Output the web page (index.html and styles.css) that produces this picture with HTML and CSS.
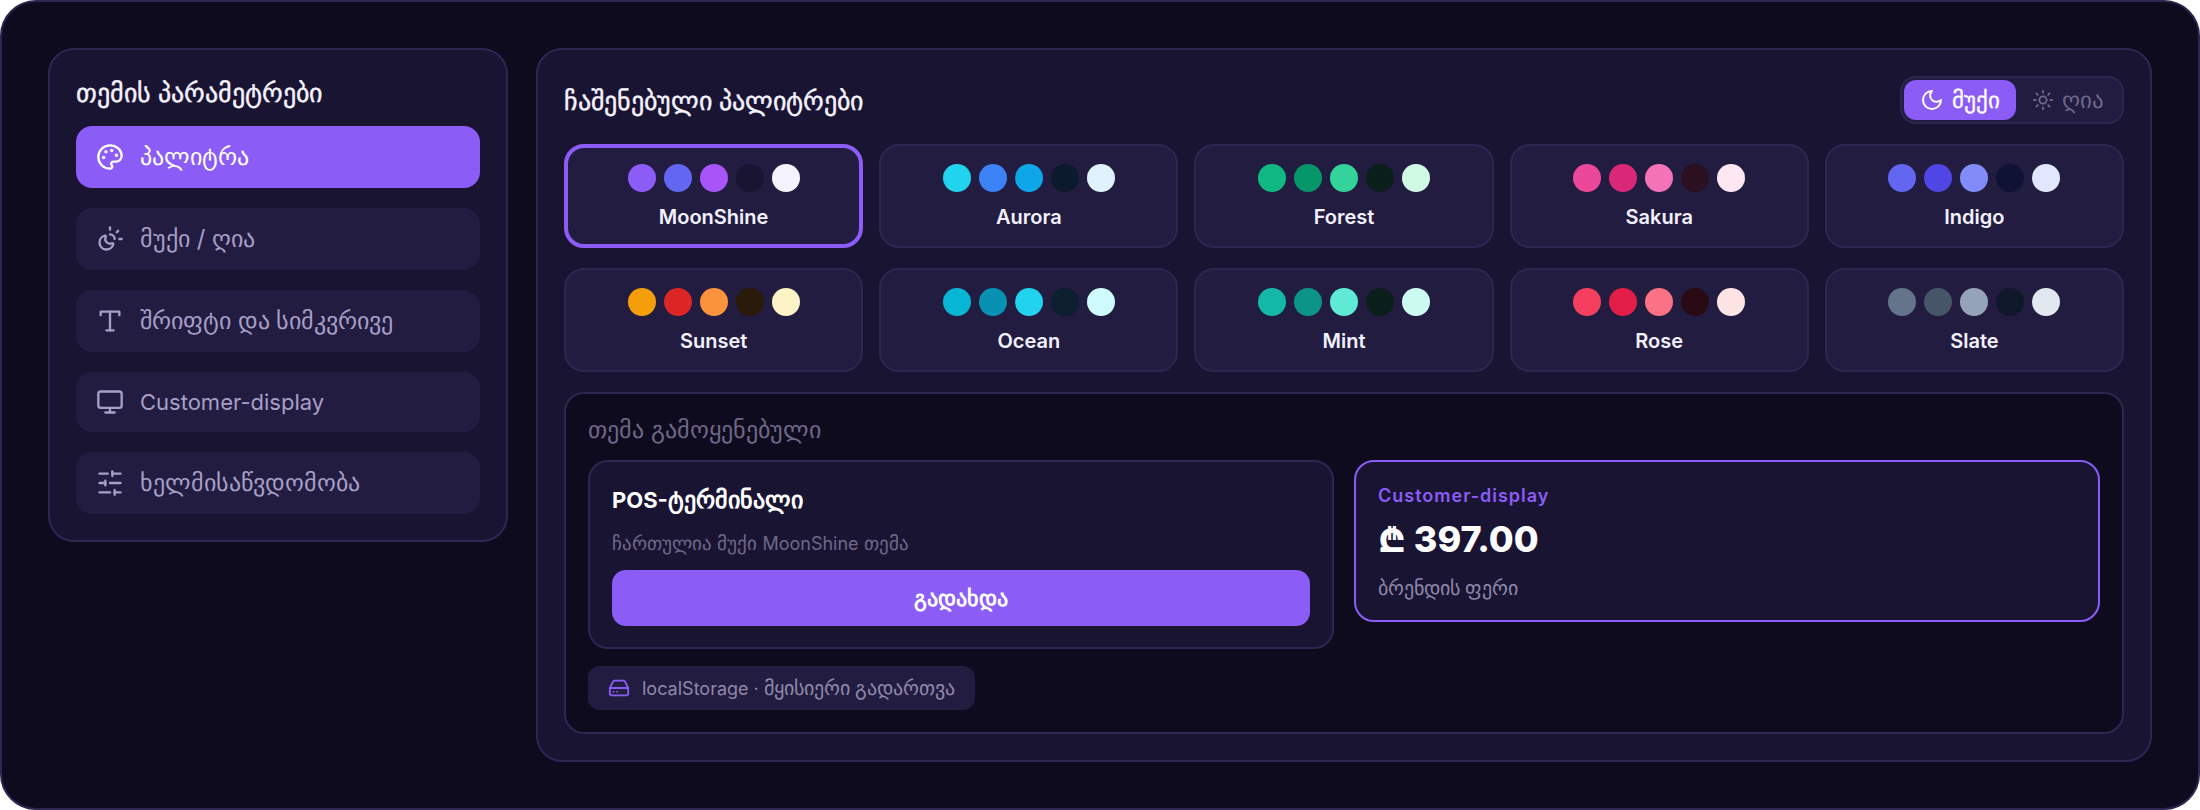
FILE: index.html
```html
<!DOCTYPE html>
<html lang="ka">
<head>
<meta charset="utf-8">
<title>თემის პარამეტრები</title>
<link rel="stylesheet" href="styles.css">
</head>
<body>
<div class="shell">
  <aside class="side panel">
    <h2 class="side-title">თემის პარამეტრები</h2>
    <nav class="nav">
      <a class="nav-item active">
        <svg class="ico" viewBox="0 0 24 24"><path d="M12 22a1 1 0 0 1 0-20 10 9 0 0 1 10 9 5 5 0 0 1-5 5h-2.25a1.75 1.75 0 0 0-1.4 2.8l.3.4a1.75 1.75 0 0 1-1.4 2.8z"/><circle class="dotfill" cx="13.5" cy="6.5" r=".5"/><circle class="dotfill" cx="17.5" cy="10.5" r=".5"/><circle class="dotfill" cx="6.5" cy="12.5" r=".5"/><circle class="dotfill" cx="8.5" cy="7.5" r=".5"/></svg>
        <span class="ka">პალიტრა</span>
      </a>
      <a class="nav-item">
        <svg class="ico" viewBox="0 0 24 24"><path d="M12 2v2"/><path d="M14.837 16.385a6 6 0 1 1-7.223-7.222c.624-.147.97.66.715 1.248a4 4 0 0 0 5.26 5.259c.589-.255 1.396.09 1.248.715"/><path d="M16 12a4 4 0 0 0-4-4"/><path d="m19 5-1.256 1.256"/><path d="M20 12h2"/></svg>
        <span class="ka">მუქი / ღია</span>
      </a>
      <a class="nav-item">
        <svg class="ico" viewBox="0 0 24 24"><path d="M4 7V4h16v3"/><path d="M9 20h6"/><path d="M12 4v16"/></svg>
        <span class="ka">შრიფტი და სიმკვრივე</span>
      </a>
      <a class="nav-item short">
        <svg class="ico" viewBox="0 0 24 24"><rect x="2" y="3" width="20" height="14" rx="2"/><path d="M8 21h8"/><path d="M12 17v4"/></svg>
        <span>Customer-display</span>
      </a>
      <a class="nav-item">
        <svg class="ico" viewBox="0 0 24 24"><path d="M21 4h-7"/><path d="M10 4H3"/><path d="M21 12h-9"/><path d="M8 12H3"/><path d="M21 20h-5"/><path d="M12 20H3"/><path d="M14 2v4"/><path d="M8 10v4"/><path d="M16 18v4"/></svg>
        <span class="ka">ხელმისაწვდომობა</span>
      </a>
    </nav>
  </aside>

  <main class="main panel">
    <header class="main-head">
      <h2 class="main-title">ჩაშენებული პალიტრები</h2>
      <div class="toggle">
        <button class="tog on">
          <svg class="ico-m" viewBox="0 0 24 24"><path d="M12 3a6 6 0 0 0 9 9 9 9 0 1 1-9-9Z"/></svg>
          <span>მუქი</span>
        </button>
        <button class="tog">
          <svg class="ico-s" viewBox="0 0 24 24"><circle cx="12" cy="12" r="4"/><path d="M12 2v2"/><path d="M12 20v2"/><path d="m4.93 4.93 1.41 1.41"/><path d="m17.66 17.66 1.41 1.41"/><path d="M2 12h2"/><path d="M20 12h2"/><path d="m6.34 17.66-1.41 1.41"/><path d="m19.07 4.93-1.41 1.41"/></svg>
          <span>ღია</span>
        </button>
      </div>
    </header>

    <div class="grid">
      <div class="card sel">
        <div class="dots"><i style="background:#8b5cf6"></i><i style="background:#6366f1"></i><i style="background:#a855f7"></i><i style="background:#1a1433"></i><i style="background:#f5f3ff"></i></div>
        <div class="card-name">MoonShine</div>
      </div>
      <div class="card">
        <div class="dots"><i style="background:#22d3ee"></i><i style="background:#3b82f6"></i><i style="background:#0ea5e9"></i><i style="background:#0c1a2e"></i><i style="background:#e0f2fe"></i></div>
        <div class="card-name">Aurora</div>
      </div>
      <div class="card">
        <div class="dots"><i style="background:#10b981"></i><i style="background:#059669"></i><i style="background:#34d399"></i><i style="background:#0a1f1a"></i><i style="background:#d1fae5"></i></div>
        <div class="card-name">Forest</div>
      </div>
      <div class="card">
        <div class="dots"><i style="background:#ec4899"></i><i style="background:#db2777"></i><i style="background:#f472b6"></i><i style="background:#2a1020"></i><i style="background:#fce7f3"></i></div>
        <div class="card-name">Sakura</div>
      </div>
      <div class="card">
        <div class="dots"><i style="background:#6366f1"></i><i style="background:#4f46e5"></i><i style="background:#818cf8"></i><i style="background:#0f1235"></i><i style="background:#e0e7ff"></i></div>
        <div class="card-name">Indigo</div>
      </div>
      <div class="card">
        <div class="dots"><i style="background:#f59e0b"></i><i style="background:#dc2626"></i><i style="background:#fb923c"></i><i style="background:#2a1a0a"></i><i style="background:#fef3c7"></i></div>
        <div class="card-name">Sunset</div>
      </div>
      <div class="card">
        <div class="dots"><i style="background:#06b6d4"></i><i style="background:#0891b2"></i><i style="background:#22d3ee"></i><i style="background:#0c1f2e"></i><i style="background:#cffafe"></i></div>
        <div class="card-name">Ocean</div>
      </div>
      <div class="card">
        <div class="dots"><i style="background:#14b8a6"></i><i style="background:#0d9488"></i><i style="background:#5eead4"></i><i style="background:#0a1f1c"></i><i style="background:#ccfbf1"></i></div>
        <div class="card-name">Mint</div>
      </div>
      <div class="card">
        <div class="dots"><i style="background:#f43f5e"></i><i style="background:#e11d48"></i><i style="background:#fb7185"></i><i style="background:#2a0a14"></i><i style="background:#ffe4e6"></i></div>
        <div class="card-name">Rose</div>
      </div>
      <div class="card">
        <div class="dots"><i style="background:#64748b"></i><i style="background:#475569"></i><i style="background:#94a3b8"></i><i style="background:#0f172a"></i><i style="background:#e2e8f0"></i></div>
        <div class="card-name">Slate</div>
      </div>
    </div>

    <section class="preview">
      <div class="preview-label">თემა გამოყენებული</div>
      <div class="preview-cols">
        <div class="pos">
          <div class="pos-title">POS-<span class="ka-t">ტერმინალი</span></div>
          <div class="pos-sub"><span class="ka-s">ჩართულია მუქი</span> MoonShine <span class="ka-s">თემა</span></div>
          <button class="pay">გადახდა</button>
        </div>
        <div class="cust">
          <div class="cust-label">Customer-display</div>
          <div class="cust-price">₾ 397.00</div>
          <div class="cust-sub">ბრენდის ფერი</div>
        </div>
      </div>
      <div class="chip">
        <svg class="ico-c" viewBox="0 0 24 24"><path d="M22 12H2"/><path d="M5.45 5.11 2 12v6a2 2 0 0 0 2 2h16a2 2 0 0 0 2-2v-6l-3.45-6.89A2 2 0 0 0 16.76 4H7.24a2 2 0 0 0-1.79 1.11z"/><path d="M6 16h.01"/><path d="M10 16h.01"/></svg>
        <span>localStorage · <span class="ka-c">მყისიერი გადართვა</span></span>
      </div>
    </section>
  </main>
</div>
</body>
</html>
```
FILE: styles.css
```css
* { box-sizing: border-box; }
html, body { margin: 0; padding: 0; background: #fff; }
body { font-family: Inter, sans-serif; color: #f5f3ff; }
h2 { margin: 0; }
button { font: inherit; border: 0; }

.shell {
  width: 2200px;
  height: 810px;
  padding: 46px;
  display: flex;
  align-items: flex-start;
  gap: 28px;
  background: #0f0b1e;
  border: 2px solid #2d2650;
  border-radius: 36px;
}
.panel {
  background: #1a1433;
  border: 2px solid #2d2650;
  border-radius: 26px;
}

.side { width: 460px; flex: none; height: 494px; padding: 26px; }
.side-title { font-size: 26px; font-weight: 500; -webkit-text-stroke: .4px currentColor; line-height: 34px; height: 34px; margin-bottom: 16px; color: #f5f3ff; white-space: nowrap; }
.nav { display: flex; flex-direction: column; gap: 20px; }
.nav-item {
  display: flex;
  align-items: center;
  gap: 16px;
  height: 62px;
  padding: 0 20px;
  border-radius: 16px;
  background: #221c40;
  color: #a79fc7;
  font-size: 22px;
  line-height: 30px;
}
.ka { font-size: 23.8px; }
.nav-item.short { height: 60px; }
.nav-item.active { background: #8b5cf6; color: #fff; font-weight: 500; }
.ico { width: 28px; height: 28px; flex: none; fill: none; stroke: currentColor; stroke-width: 2; stroke-linecap: round; stroke-linejoin: round; }
.dotfill { fill: currentColor; }

.main { width: 1616px; height: 714px; flex: none; padding: 26px; }
.main-head { display: flex; align-items: center; justify-content: space-between; height: 48px; margin-bottom: 20px; }
.main-title { font-size: 26px; font-weight: 500; -webkit-text-stroke: .4px currentColor; color: #f5f3ff; }
.toggle { display: flex; padding: 2px; height: 48px; background: #221c40; border: 2px solid #2d2650; border-radius: 16px; }
.tog { display: flex; align-items: center; gap: 8px; height: 40px; padding: 0 16px; border-radius: 12px; background: transparent; color: #6f6888; font-size: 23px; font-weight: 500; }
.tog.on { background: #8b5cf6; color: #fff; -webkit-text-stroke: .3px currentColor; }
.ico-s, .ico-m { fill: none; stroke: currentColor; stroke-width: 2; stroke-linecap: round; stroke-linejoin: round; flex: none; }
.ico-s { width: 22px; height: 22px; }
.ico-m { width: 24px; height: 24px; }

.grid { display: grid; grid-template-columns: repeat(5, 1fr); gap: 20px 16px; }
.card {
  height: 104px;
  padding-top: 18px;
  background: #221c40;
  border: 2px solid #2d2650;
  border-radius: 20px;
  display: flex;
  flex-direction: column;
  align-items: center;
  gap: 12px;
}
.card.sel { border: 4px solid #8b5cf6; padding-top: 16px; }
.dots { display: flex; gap: 8px; }
.dots i { width: 28px; height: 28px; border-radius: 50%; display: block; }
.card-name { font-size: 20px; font-weight: 600; line-height: 26px; color: #f3f0ff; }

.preview {
  margin-top: 20px;
  height: 342px;
  padding: 22px;
  background: #0f0b1e;
  border: 2px solid #2d2650;
  border-radius: 20px;
}
.preview-label { font-size: 23.8px; line-height: 28px; height: 28px; color: #6f6888; margin-bottom: 16px; }
.preview-cols { display: grid; grid-template-columns: 1fr 1fr; gap: 20px; align-items: start; }
.pos, .cust { background: #1a1433; border-radius: 20px; padding: 22px; }
.pos { border: 2px solid #2d2650; height: 189px; }
.cust { border: 2px solid #8b5cf6; height: 162px; }
.pos-title { font-size: 22px; font-weight: 700; line-height: 32px; height: 32px; color: #fff; }
.ka-t { font-size: 24px; }
.pos-sub { font-size: 18px; line-height: 28px; height: 28px; margin-top: 14px; color: #6f6888; }
.ka-s { font-size: 19px; }
.pay { display: block; width: 100%; height: 56px; margin-top: 12px; border-radius: 14px; background: #8b5cf6; color: #fff; font-size: 22px; font-weight: 700; }
.cust-label { font-size: 18px; font-weight: 600; letter-spacing: 1px; line-height: 24px; color: #8b5cf6; }
.cust-price { font-size: 36px; font-weight: 800; line-height: 44px; margin-top: 9px; color: #fff; }
.cust-sub { font-size: 19.5px; line-height: 28px; margin-top: 13px; color: #8f88aa; }
.chip { display: inline-flex; align-items: center; gap: 12px; height: 44px; margin-top: 17px; padding: 0 20px; border-radius: 12px; background: #221c40; color: #8f88aa; font-size: 18px; line-height: 28px; }
.ka-c { font-size: 19.5px; }
.ico-c { width: 22px; height: 22px; flex: none; fill: none; stroke: #8b5cf6; stroke-width: 2; stroke-linecap: round; stroke-linejoin: round; }
```
